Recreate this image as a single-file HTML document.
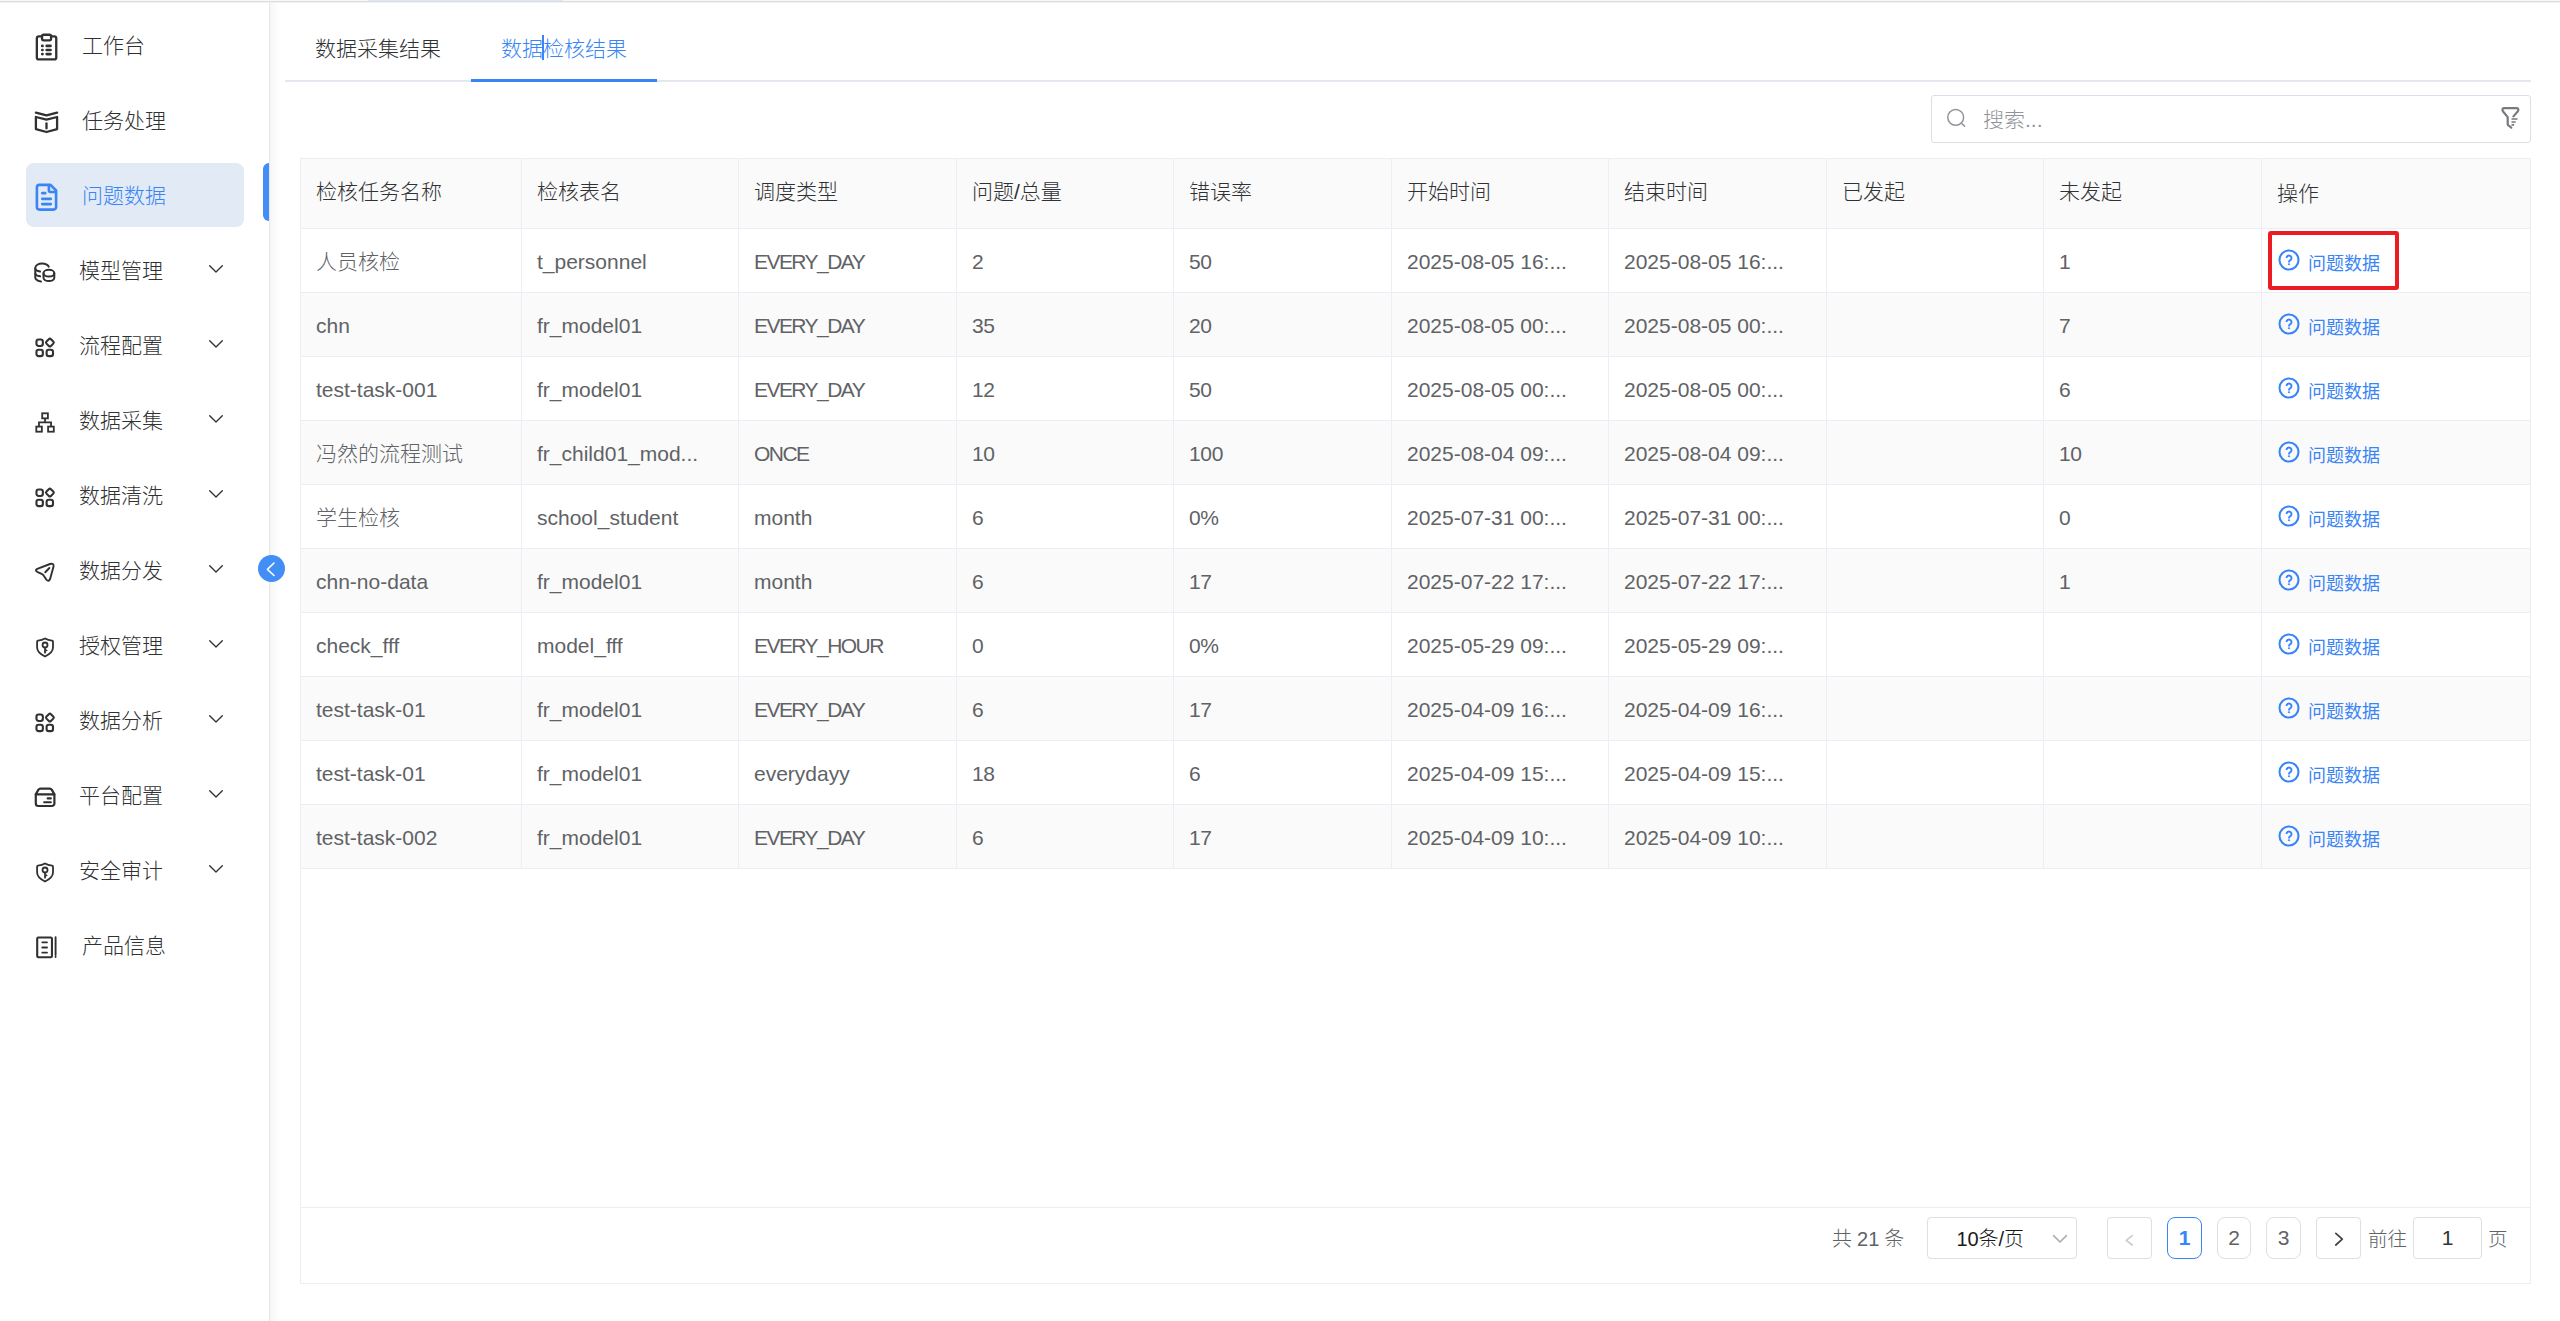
<!DOCTYPE html>
<html lang="zh-CN">
<head>
<meta charset="utf-8">
<title>数据检核结果</title>
<style>
*{box-sizing:border-box;margin:0;padding:0}
html,body{width:2560px;height:1321px;overflow:hidden;background:#fff}
body{position:relative;font-family:"Liberation Sans","Noto Sans CJK SC",sans-serif;font-size:21px;font-weight:300;color:#303133;-webkit-font-smoothing:antialiased}
.abs{position:absolute}
/* top strip */
#topline{left:0;top:0;width:2560px;height:3px;background:linear-gradient(to bottom,#f7f8fa 0,#f7f8fa 1px,#dcdcdc 1px,#dcdcdc 2px,#f1f2f7 2px,#f1f2f7 3px)}
#topline2{left:368px;top:0;width:195px;height:1px;background:#dbe7f9}
/* sidebar */
#side{left:0;top:3px;width:270px;height:1318px;background:#fff;border-right:1px solid #e6e6e6}
#sideshadow{left:270px;top:3px;width:11px;height:1318px;background:linear-gradient(to right,rgba(0,0,0,.04),rgba(0,0,0,.02) 40%,rgba(0,0,0,0))}
.mi{position:absolute;left:0;width:269px;height:64px}
.mi .ic{position:absolute;left:33px;top:19px;width:28px;height:28px}
.mi .tx{position:absolute;left:82px;top:0;height:64px;line-height:64px;font-size:21px;color:#303133;white-space:nowrap}
.mi.sub .tx{left:79px}
.mi .ar{position:absolute;left:208px;top:24px;width:16px;height:12px}
#active{left:26px;top:163px;width:218px;height:64px;border-radius:8px;background:#e1eaf5}
#activebar{left:263px;top:163px;width:6px;height:58px;border-radius:6px 0 0 6px;background:#438df6}
.mi.on .tx{color:#3a85f6}
/* collapse */
#collapse{left:258px;top:555px;width:27px;height:27px;border-radius:50%;background:#438df6}
/* tabs */
#tabline{left:285px;top:80px;width:2246px;height:2px;background:#e4e7ed}
#tabbar{left:471px;top:79px;width:186px;height:3px;background:#3a85f6}
.tab{position:absolute;top:29px;height:40px;line-height:40px;font-size:21px;white-space:nowrap}
#ibeam{left:542px;top:35px;width:2px;height:25px;background:#3a85f6}
/* search */
#search{left:1931px;top:95px;width:600px;height:48px;border:1px solid #dcdfe3;border-radius:3px;background:#fff}
#search .ph{position:absolute;left:51px;top:0;line-height:48px;font-size:21px;color:#909399}
/* table */
#tbl{left:300px;top:158px;width:2231px;height:1126px;border:1px solid #ebeef5}
.row{position:absolute;left:0;width:2229px;height:64px;border-bottom:1px solid #ebeef5}
.row.h{height:70px;top:0;background:#fafafa}
.row.s{background:#fafafa}
.c{position:absolute;top:0;height:100%;border-right:1px solid #ebeef5;padding-left:15px;white-space:nowrap;overflow:hidden;color:#606266;font-size:21px;line-height:65px}
.row.h .c{color:#303133;line-height:66px}
.c:last-child{border-right:none}
.c.op{display:flex;align-items:center;padding-left:15px}
.q{flex:none;margin-left:-.5px;margin-right:7.5px;margin-top:-1px}
.lk{color:#3a85f6;font-size:18px;font-weight:400;line-height:24px;padding-top:7px}
.up{letter-spacing:-1.55px}
.dt{letter-spacing:0}
.nm{letter-spacing:-.35px}
#redbox{left:2268px;top:231px;width:131px;height:59px;border:4px solid #ec1c24;border-radius:3px}
/* pagination */
#pg{left:300px;top:1207px;width:2231px;height:77px;border-top:1px solid #ebeef5}
.pb{position:absolute;top:9px;height:42px;border:1px solid #dcdfe3;border-radius:4px;background:#fff;text-align:center;line-height:40px;font-size:21px;color:#606266}
.pt{position:absolute;top:10px;height:42px;line-height:42px;font-size:19.5px;color:#606266;white-space:nowrap}
</style>
</head>
<body>
<div class="abs" id="topline"></div>
<div class="abs" id="topline2"></div>

<!-- SIDEBAR -->
<div class="abs" id="side"></div>
<div class="abs" id="sideshadow"></div>
<div class="abs" id="active"></div>
<div class="abs" id="activebar"></div>
<div id="menu">
<div class="mi" style="top:13.5px"><svg class="ic" width="28" height="28" viewBox="0 0 28 28" ><g fill="none" stroke="#303133" stroke-width="2.3" stroke-linejoin="round"><rect x="3.85" y="3.45" width="19.4" height="23" rx="2"/><rect x="9.05" y="1.75" width="9" height="5.6" rx="1.6" fill="#fff"/></g><g stroke="#303133" stroke-width="2.7" stroke-linecap="round"><path d="M9.3 12.9h.2M9.3 17h.2M9.3 21.1h.2M13.7 12.9h3.8M13.7 17h3.8M13.7 21.1h3.8"/></g></svg><span class="tx">工作台</span></div>
<div class="mi" style="top:88.5px"><svg class="ic" width="28" height="28" viewBox="0 0 28 28" ><g fill="none" stroke="#303133" stroke-width="2.3" stroke-linecap="round" stroke-linejoin="round"><path d="M2.9 4.6 13.5 7.35 24.1 4.6"/><path d="M2.9 9 13.5 11.7 24.1 9V21.100L13.5 24 2.9 21.100Z"/><path d="M13.5 15.500v4.900"/></g></svg><span class="tx">任务处理</span></div>
<div class="mi on" style="top:163.5px"><svg class="ic" width="28" height="28" viewBox="0 0 28 28" ><g fill="none" stroke="#3a85f6" stroke-width="2.6" stroke-linecap="round" stroke-linejoin="round"><path d="M6.4 1.900H17.500L23.100 7.500V24.100a2.500 2.500 0 0 1-2.500 2.500H6.400a2.500 2.500 0 0 1-2.500-2.500V4.400a2.500 2.500 0 0 1 2.500-2.500Z"/><path d="M15.900 2.200V7.500a1.500 1.500 0 0 0 1.500 1.500H22.800"/><path d="M9.300 10.200H12.200M9.300 15.800H17.800M9.300 21.100H17.800" stroke-width="2.700"/></g></svg><span class="tx">问题数据</span></div>
<div class="mi sub" style="top:238.5px"><svg class="ic" width="28" height="28" viewBox="0 0 28 28" ><g fill="none" stroke="#303133" stroke-width="2" stroke-linecap="round" stroke-linejoin="round"><ellipse cx="15.900" cy="15.200" rx="5.400" ry="3.400"/><path d="M10.500 15.200v4.600c0 1.900 2.400 3.300 5.400 3.300s5.400-1.400 5.400-3.300v-4.600"/><path d="M15.700 8.600C14.600 6.600 12.200 5.500 9.200 5.500 5.400 5.500 2.300 7.400 2.300 9.900V19.600C2.300 21.400 4.600 22.900 8 23.500"/><path d="M2.300 10.800C2.600 12.100 4.600 13.100 7.100 13.500M2.300 15.600C2.600 16.900 4.600 17.900 7.100 18.350"/></g></svg><span class="tx">模型管理</span><svg class="ar" width="16" height="12" viewBox="0 0 16 12"><path d="M1.700 2.800 8 9l6.300-6.200" fill="none" stroke="#303133" stroke-width="1.350" stroke-linecap="round" stroke-linejoin="round"/></svg></div>
<div class="mi sub" style="top:313.5px"><svg class="ic" width="28" height="28" viewBox="0 0 28 28" ><g fill="none" stroke="#303133" stroke-width="2.100" stroke-linejoin="round"><rect x="3.450" y="6.500" width="6.400" height="6.500" rx="2.200"/><rect x="3.450" y="16.800" width="6.400" height="6.300" rx="2.200"/><rect x="13.600" y="16.800" width="6.400" height="6.300" rx="2.200"/><rect x="13.730" y="6.410" width="6.300" height="6.300" rx="1.500" transform="rotate(45 16.880 9.560)"/></g></svg><span class="tx">流程配置</span><svg class="ar" width="16" height="12" viewBox="0 0 16 12"><path d="M1.700 2.800 8 9l6.300-6.200" fill="none" stroke="#303133" stroke-width="1.350" stroke-linecap="round" stroke-linejoin="round"/></svg></div>
<div class="mi sub" style="top:388.5px"><svg class="ic" width="28" height="28" viewBox="0 0 28 28" ><g fill="none" stroke="#303133" stroke-width="1.800" stroke-linejoin="miter"><rect x="9.200" y="5.300" width="5.700" height="5.050"/><rect x="3.300" y="18.600" width="5.550" height="5.100"/><rect x="15.100" y="18.600" width="5.700" height="5.100"/><path d="M12.030 10.400V14.400M5.970 18.600V14.400H18.030V18.600"/></g></svg><span class="tx">数据采集</span><svg class="ar" width="16" height="12" viewBox="0 0 16 12"><path d="M1.700 2.800 8 9l6.300-6.200" fill="none" stroke="#303133" stroke-width="1.350" stroke-linecap="round" stroke-linejoin="round"/></svg></div>
<div class="mi sub" style="top:463.5px"><svg class="ic" width="28" height="28" viewBox="0 0 28 28" ><g fill="none" stroke="#303133" stroke-width="2.100" stroke-linejoin="round"><rect x="3.450" y="6.500" width="6.400" height="6.500" rx="2.200"/><rect x="3.450" y="16.800" width="6.400" height="6.300" rx="2.200"/><rect x="13.600" y="16.800" width="6.400" height="6.300" rx="2.200"/><rect x="13.730" y="6.410" width="6.300" height="6.300" rx="1.500" transform="rotate(45 16.880 9.560)"/></g></svg><span class="tx">数据清洗</span><svg class="ar" width="16" height="12" viewBox="0 0 16 12"><path d="M1.700 2.800 8 9l6.300-6.200" fill="none" stroke="#303133" stroke-width="1.350" stroke-linecap="round" stroke-linejoin="round"/></svg></div>
<div class="mi sub" style="top:538.5px"><svg class="ic" width="28" height="28" viewBox="0 0 28 28" ><g fill="none" stroke="#303133" stroke-width="1.900" stroke-linejoin="round" stroke-linecap="round"><path d="M4.300 10.900 17 6Q20.900 4.800 20.600 8.300L17.100 20.900Q15.900 24.200 13.300 21.600L10.600 17.500Q9.900 16.300 8.600 15.800L4.200 13.800Q1.600 12.300 4.300 10.900Z"/><path d="M16.360 10 12.270 14.260"/></g></svg><span class="tx">数据分发</span><svg class="ar" width="16" height="12" viewBox="0 0 16 12"><path d="M1.700 2.800 8 9l6.300-6.200" fill="none" stroke="#303133" stroke-width="1.350" stroke-linecap="round" stroke-linejoin="round"/></svg></div>
<div class="mi sub" style="top:613.5px"><svg class="ic" width="28" height="28" viewBox="0 0 28 28" ><g fill="none" stroke="#303133" stroke-width="1.800" stroke-linejoin="round" stroke-linecap="round"><path d="M12.030 5.500C10 6.700 7 7.500 5 7.700Q4.100 7.800 4.100 8.800V14.500C4.100 18.500 7.500 21.300 12.030 23.500 16.500 21.300 20 18.500 20 14.500V8.800Q20 7.800 19.100 7.700C17 7.500 14 6.700 12.030 5.500Z"/><circle cx="12.030" cy="12" r="2.500"/><path d="M12.030 14.600v5.100"/></g><path d="M12.700 15.700 14.800 17.700 12.700 18.600Z" fill="#303133"/></svg><span class="tx">授权管理</span><svg class="ar" width="16" height="12" viewBox="0 0 16 12"><path d="M1.700 2.800 8 9l6.300-6.200" fill="none" stroke="#303133" stroke-width="1.350" stroke-linecap="round" stroke-linejoin="round"/></svg></div>
<div class="mi sub" style="top:688.5px"><svg class="ic" width="28" height="28" viewBox="0 0 28 28" ><g fill="none" stroke="#303133" stroke-width="2.100" stroke-linejoin="round"><rect x="3.450" y="6.500" width="6.400" height="6.500" rx="2.200"/><rect x="3.450" y="16.800" width="6.400" height="6.300" rx="2.200"/><rect x="13.600" y="16.800" width="6.400" height="6.300" rx="2.200"/><rect x="13.730" y="6.410" width="6.300" height="6.300" rx="1.500" transform="rotate(45 16.880 9.560)"/></g></svg><span class="tx">数据分析</span><svg class="ar" width="16" height="12" viewBox="0 0 16 12"><path d="M1.700 2.800 8 9l6.300-6.200" fill="none" stroke="#303133" stroke-width="1.350" stroke-linecap="round" stroke-linejoin="round"/></svg></div>
<div class="mi sub" style="top:763.5px"><svg class="ic" width="28" height="28" viewBox="0 0 28 28" ><g fill="none" stroke="#303133" stroke-width="2.200" stroke-linejoin="round" stroke-linecap="round"><path d="M2.800 11.400V20.500a2.500 2.500 0 0 0 2.500 2.500H18.900a2.500 2.500 0 0 0 2.500-2.500V11.400"/><path d="M2.800 11.400 5.300 6.900Q6.100 5.600 7.600 5.600H16.600Q18.100 5.600 18.900 6.900L21.400 11.400Z"/><path d="M14.700 15.450h3.100M11.200 19.250h6.600"/></g></svg><span class="tx">平台配置</span><svg class="ar" width="16" height="12" viewBox="0 0 16 12"><path d="M1.700 2.800 8 9l6.300-6.200" fill="none" stroke="#303133" stroke-width="1.350" stroke-linecap="round" stroke-linejoin="round"/></svg></div>
<div class="mi sub" style="top:838.5px"><svg class="ic" width="28" height="28" viewBox="0 0 28 28" ><g fill="none" stroke="#303133" stroke-width="1.800" stroke-linejoin="round" stroke-linecap="round"><path d="M12.030 5.500C10 6.700 7 7.500 5 7.700Q4.100 7.800 4.100 8.800V14.500C4.100 18.500 7.500 21.300 12.030 23.500 16.500 21.300 20 18.500 20 14.500V8.800Q20 7.800 19.100 7.700C17 7.500 14 6.700 12.030 5.500Z"/><circle cx="12.030" cy="12" r="2.500"/><path d="M12.030 14.600v5.100"/></g><path d="M12.700 15.700 14.800 17.700 12.700 18.600Z" fill="#303133"/></svg><span class="tx">安全审计</span><svg class="ar" width="16" height="12" viewBox="0 0 16 12"><path d="M1.700 2.800 8 9l6.300-6.200" fill="none" stroke="#303133" stroke-width="1.350" stroke-linecap="round" stroke-linejoin="round"/></svg></div>
<div class="mi" style="top:913.5px"><svg class="ic" width="28" height="28" viewBox="0 0 28 28" ><g fill="none" stroke="#303133" stroke-width="2.100" stroke-linejoin="round" stroke-linecap="round"><rect x="4.200" y="4.550" width="14.750" height="19.700" rx="1.200"/><path d="M9.300 9.350h4.700M9.300 14.500h4.700M9.300 19.600h4.700" stroke-width="1.900"/><path d="M22.580 4.300V22M22.580 23.800v.2" stroke-width="1.900"/></g></svg><span class="tx">产品信息</span></div>
</div>
<div class="abs" id="collapse"><svg style="position:absolute;left:0;top:0" width="27" height="27" viewBox="0 0 27 27"><path d="M16 8 9.400 14.300 16 20.500" fill="none" stroke="#fff" stroke-width="1.600" stroke-linecap="round" stroke-linejoin="round"/></svg></div>

<!-- TABS -->
<div class="abs" id="tabline"></div>
<div class="abs" id="tabbar"></div>
<div class="tab" style="left:315px;color:#303133">数据采集结果</div>
<div class="tab" style="left:501px;color:#3a85f6">数据检核结果</div>
<div class="abs" id="ibeam"></div>

<!-- SEARCH -->
<div class="abs" id="search"><svg style="position:absolute;left:12px;top:10px" width="26" height="26" viewBox="0 0 26 26"><circle cx="11.700" cy="11.400" r="7.900" fill="none" stroke="#909399" stroke-width="1.500"/><path d="M17.300 17 20.600 20.300" stroke="#909399" stroke-width="1.500" stroke-linecap="round"/></svg><span class="ph">搜索...</span><svg style="position:absolute;left:566px;top:8px" width="26" height="28" viewBox="0 0 26 28"><g fill="none" stroke="#76797d" stroke-linejoin="round" stroke-linecap="round"><path d="M15.400 12.400 19.900 7.200Q21.400 4.200 18.300 4.200H6.500Q3.400 4.200 4.900 7.200L9.700 13.100V19.900Q9.700 20.900 10.500 21.500L13.300 23.700" stroke-width="2.200"/><path d="M13.500 15H19.500M13.500 18H17.700M13.500 20.900H16.100" stroke-width="1.600" stroke-linecap="butt"/></g></svg></div>

<!-- TABLE -->
<div class="abs" id="tbl">
<div class="row h"><div class="c" style="left:0px;width:221px">检核任务名称</div><div class="c" style="left:221px;width:217px">检核表名</div><div class="c" style="left:438px;width:218px">调度类型</div><div class="c" style="left:656px;width:217px">问题/总量</div><div class="c" style="left:873px;width:218px">错误率</div><div class="c" style="left:1091px;width:217px">开始时间</div><div class="c" style="left:1308px;width:218px">结束时间</div><div class="c" style="left:1526px;width:217px">已发起</div><div class="c" style="left:1743px;width:218px">未发起</div><div class="c" style="left:1961px;width:268px;padding-top:2px">操作</div></div>
<div class="row" style="top:70px"><div class="c" style="left:0px;width:221px">人员核检</div><div class="c" style="left:221px;width:217px">t_personnel</div><div class="c up" style="left:438px;width:218px">EVERY_DAY</div><div class="c nm" style="left:656px;width:217px">2</div><div class="c nm" style="left:873px;width:218px">50</div><div class="c dt" style="left:1091px;width:217px">2025-08-05 16:...</div><div class="c dt" style="left:1308px;width:218px">2025-08-05 16:...</div><div class="c" style="left:1526px;width:217px"></div><div class="c nm" style="left:1743px;width:218px">1</div><div class="c op" style="left:1961px;width:268px"><svg class="q" width="24" height="24" viewBox="0 0 24 24"><circle cx="12" cy="12" r="9.500" fill="none" stroke="#3a85f6" stroke-width="2.100"/><path d="M9.500 10.100a2.500 2.500 0 1 1 3.800 2.100c-.9.500-1.300 1-1.300 1.800v.4" fill="none" stroke="#3a85f6" stroke-width="1.900"/><path d="M12 15 13.300 16.300 12 17.600 10.700 16.300Z" fill="#3a85f6"/></svg><span class="lk">问题数据</span></div></div>
<div class="row s" style="top:134px"><div class="c" style="left:0px;width:221px">chn</div><div class="c" style="left:221px;width:217px">fr_model01</div><div class="c up" style="left:438px;width:218px">EVERY_DAY</div><div class="c nm" style="left:656px;width:217px">35</div><div class="c nm" style="left:873px;width:218px">20</div><div class="c dt" style="left:1091px;width:217px">2025-08-05 00:...</div><div class="c dt" style="left:1308px;width:218px">2025-08-05 00:...</div><div class="c" style="left:1526px;width:217px"></div><div class="c nm" style="left:1743px;width:218px">7</div><div class="c op" style="left:1961px;width:268px"><svg class="q" width="24" height="24" viewBox="0 0 24 24"><circle cx="12" cy="12" r="9.500" fill="none" stroke="#3a85f6" stroke-width="2.100"/><path d="M9.500 10.100a2.500 2.500 0 1 1 3.800 2.100c-.9.500-1.300 1-1.300 1.800v.4" fill="none" stroke="#3a85f6" stroke-width="1.900"/><path d="M12 15 13.300 16.300 12 17.600 10.700 16.300Z" fill="#3a85f6"/></svg><span class="lk">问题数据</span></div></div>
<div class="row" style="top:198px"><div class="c" style="left:0px;width:221px">test-task-001</div><div class="c" style="left:221px;width:217px">fr_model01</div><div class="c up" style="left:438px;width:218px">EVERY_DAY</div><div class="c nm" style="left:656px;width:217px">12</div><div class="c nm" style="left:873px;width:218px">50</div><div class="c dt" style="left:1091px;width:217px">2025-08-05 00:...</div><div class="c dt" style="left:1308px;width:218px">2025-08-05 00:...</div><div class="c" style="left:1526px;width:217px"></div><div class="c nm" style="left:1743px;width:218px">6</div><div class="c op" style="left:1961px;width:268px"><svg class="q" width="24" height="24" viewBox="0 0 24 24"><circle cx="12" cy="12" r="9.500" fill="none" stroke="#3a85f6" stroke-width="2.100"/><path d="M9.500 10.100a2.500 2.500 0 1 1 3.800 2.100c-.9.500-1.300 1-1.300 1.800v.4" fill="none" stroke="#3a85f6" stroke-width="1.900"/><path d="M12 15 13.300 16.300 12 17.600 10.700 16.300Z" fill="#3a85f6"/></svg><span class="lk">问题数据</span></div></div>
<div class="row s" style="top:262px"><div class="c" style="left:0px;width:221px">冯然的流程测试</div><div class="c" style="left:221px;width:217px">fr_child01_mod...</div><div class="c up" style="left:438px;width:218px">ONCE</div><div class="c nm" style="left:656px;width:217px">10</div><div class="c nm" style="left:873px;width:218px">100</div><div class="c dt" style="left:1091px;width:217px">2025-08-04 09:...</div><div class="c dt" style="left:1308px;width:218px">2025-08-04 09:...</div><div class="c" style="left:1526px;width:217px"></div><div class="c nm" style="left:1743px;width:218px">10</div><div class="c op" style="left:1961px;width:268px"><svg class="q" width="24" height="24" viewBox="0 0 24 24"><circle cx="12" cy="12" r="9.500" fill="none" stroke="#3a85f6" stroke-width="2.100"/><path d="M9.500 10.100a2.500 2.500 0 1 1 3.800 2.100c-.9.500-1.300 1-1.300 1.800v.4" fill="none" stroke="#3a85f6" stroke-width="1.900"/><path d="M12 15 13.300 16.300 12 17.600 10.700 16.300Z" fill="#3a85f6"/></svg><span class="lk">问题数据</span></div></div>
<div class="row" style="top:326px"><div class="c" style="left:0px;width:221px">学生检核</div><div class="c" style="left:221px;width:217px">school_student</div><div class="c" style="left:438px;width:218px">month</div><div class="c nm" style="left:656px;width:217px">6</div><div class="c nm" style="left:873px;width:218px">0%</div><div class="c dt" style="left:1091px;width:217px">2025-07-31 00:...</div><div class="c dt" style="left:1308px;width:218px">2025-07-31 00:...</div><div class="c" style="left:1526px;width:217px"></div><div class="c nm" style="left:1743px;width:218px">0</div><div class="c op" style="left:1961px;width:268px"><svg class="q" width="24" height="24" viewBox="0 0 24 24"><circle cx="12" cy="12" r="9.500" fill="none" stroke="#3a85f6" stroke-width="2.100"/><path d="M9.500 10.100a2.500 2.500 0 1 1 3.800 2.100c-.9.500-1.300 1-1.300 1.800v.4" fill="none" stroke="#3a85f6" stroke-width="1.900"/><path d="M12 15 13.300 16.300 12 17.600 10.700 16.300Z" fill="#3a85f6"/></svg><span class="lk">问题数据</span></div></div>
<div class="row s" style="top:390px"><div class="c" style="left:0px;width:221px">chn-no-data</div><div class="c" style="left:221px;width:217px">fr_model01</div><div class="c" style="left:438px;width:218px">month</div><div class="c nm" style="left:656px;width:217px">6</div><div class="c nm" style="left:873px;width:218px">17</div><div class="c dt" style="left:1091px;width:217px">2025-07-22 17:...</div><div class="c dt" style="left:1308px;width:218px">2025-07-22 17:...</div><div class="c" style="left:1526px;width:217px"></div><div class="c nm" style="left:1743px;width:218px">1</div><div class="c op" style="left:1961px;width:268px"><svg class="q" width="24" height="24" viewBox="0 0 24 24"><circle cx="12" cy="12" r="9.500" fill="none" stroke="#3a85f6" stroke-width="2.100"/><path d="M9.500 10.100a2.500 2.500 0 1 1 3.800 2.100c-.9.500-1.300 1-1.300 1.800v.4" fill="none" stroke="#3a85f6" stroke-width="1.900"/><path d="M12 15 13.300 16.300 12 17.600 10.700 16.300Z" fill="#3a85f6"/></svg><span class="lk">问题数据</span></div></div>
<div class="row" style="top:454px"><div class="c" style="left:0px;width:221px">check_fff</div><div class="c" style="left:221px;width:217px">model_fff</div><div class="c up" style="left:438px;width:218px">EVERY_HOUR</div><div class="c nm" style="left:656px;width:217px">0</div><div class="c nm" style="left:873px;width:218px">0%</div><div class="c dt" style="left:1091px;width:217px">2025-05-29 09:...</div><div class="c dt" style="left:1308px;width:218px">2025-05-29 09:...</div><div class="c" style="left:1526px;width:217px"></div><div class="c" style="left:1743px;width:218px"></div><div class="c op" style="left:1961px;width:268px"><svg class="q" width="24" height="24" viewBox="0 0 24 24"><circle cx="12" cy="12" r="9.500" fill="none" stroke="#3a85f6" stroke-width="2.100"/><path d="M9.500 10.100a2.500 2.500 0 1 1 3.800 2.100c-.9.500-1.300 1-1.300 1.800v.4" fill="none" stroke="#3a85f6" stroke-width="1.900"/><path d="M12 15 13.300 16.300 12 17.600 10.700 16.300Z" fill="#3a85f6"/></svg><span class="lk">问题数据</span></div></div>
<div class="row s" style="top:518px"><div class="c" style="left:0px;width:221px">test-task-01</div><div class="c" style="left:221px;width:217px">fr_model01</div><div class="c up" style="left:438px;width:218px">EVERY_DAY</div><div class="c nm" style="left:656px;width:217px">6</div><div class="c nm" style="left:873px;width:218px">17</div><div class="c dt" style="left:1091px;width:217px">2025-04-09 16:...</div><div class="c dt" style="left:1308px;width:218px">2025-04-09 16:...</div><div class="c" style="left:1526px;width:217px"></div><div class="c" style="left:1743px;width:218px"></div><div class="c op" style="left:1961px;width:268px"><svg class="q" width="24" height="24" viewBox="0 0 24 24"><circle cx="12" cy="12" r="9.500" fill="none" stroke="#3a85f6" stroke-width="2.100"/><path d="M9.500 10.100a2.500 2.500 0 1 1 3.800 2.100c-.9.500-1.300 1-1.300 1.800v.4" fill="none" stroke="#3a85f6" stroke-width="1.900"/><path d="M12 15 13.300 16.300 12 17.600 10.700 16.300Z" fill="#3a85f6"/></svg><span class="lk">问题数据</span></div></div>
<div class="row" style="top:582px"><div class="c" style="left:0px;width:221px">test-task-01</div><div class="c" style="left:221px;width:217px">fr_model01</div><div class="c" style="left:438px;width:218px">everydayy</div><div class="c nm" style="left:656px;width:217px">18</div><div class="c nm" style="left:873px;width:218px">6</div><div class="c dt" style="left:1091px;width:217px">2025-04-09 15:...</div><div class="c dt" style="left:1308px;width:218px">2025-04-09 15:...</div><div class="c" style="left:1526px;width:217px"></div><div class="c" style="left:1743px;width:218px"></div><div class="c op" style="left:1961px;width:268px"><svg class="q" width="24" height="24" viewBox="0 0 24 24"><circle cx="12" cy="12" r="9.500" fill="none" stroke="#3a85f6" stroke-width="2.100"/><path d="M9.500 10.100a2.500 2.500 0 1 1 3.800 2.100c-.9.500-1.300 1-1.300 1.800v.4" fill="none" stroke="#3a85f6" stroke-width="1.900"/><path d="M12 15 13.300 16.300 12 17.600 10.700 16.300Z" fill="#3a85f6"/></svg><span class="lk">问题数据</span></div></div>
<div class="row s" style="top:646px"><div class="c" style="left:0px;width:221px">test-task-002</div><div class="c" style="left:221px;width:217px">fr_model01</div><div class="c up" style="left:438px;width:218px">EVERY_DAY</div><div class="c nm" style="left:656px;width:217px">6</div><div class="c nm" style="left:873px;width:218px">17</div><div class="c dt" style="left:1091px;width:217px">2025-04-09 10:...</div><div class="c dt" style="left:1308px;width:218px">2025-04-09 10:...</div><div class="c" style="left:1526px;width:217px"></div><div class="c" style="left:1743px;width:218px"></div><div class="c op" style="left:1961px;width:268px"><svg class="q" width="24" height="24" viewBox="0 0 24 24"><circle cx="12" cy="12" r="9.500" fill="none" stroke="#3a85f6" stroke-width="2.100"/><path d="M9.500 10.100a2.500 2.500 0 1 1 3.800 2.100c-.9.500-1.300 1-1.300 1.800v.4" fill="none" stroke="#3a85f6" stroke-width="1.900"/><path d="M12 15 13.300 16.300 12 17.600 10.700 16.300Z" fill="#3a85f6"/></svg><span class="lk">问题数据</span></div></div>
</div>

<div class="abs" id="redbox"></div>
<!-- PAGINATION -->
<div class="abs" id="pg">
<span class="pt" style="left:1532px;font-size:20px;word-spacing:-.5px">共 21 条</span>
<div class="pb" style="left:1627px;width:150px;color:#1a1a1a;text-align:left;padding-left:28.5px;font-size:20px;line-height:43px;letter-spacing:-.1px">10条/页<svg style="position:absolute;left:124px;top:15px" width="16" height="12" viewBox="0 0 16 12"><path d="M1.600 2.600 8 9l6.400-6.400" fill="none" stroke="#a8abb2" stroke-width="1.500" stroke-linecap="round" stroke-linejoin="round"/></svg></div>
<div class="pb" style="left:1807px;width:45px"><svg style="position:absolute;left:14px;top:12px" width="14" height="18" viewBox="0 0 14 18"><path d="M10.200 6.800 4.300 11.500l5.900 4.700" fill="none" stroke="#c9ccd3" stroke-width="1.700" stroke-linecap="round" stroke-linejoin="round" transform="translate(0 -1.200)"/></svg></div>
<div class="pb" style="left:1867px;width:35px;border-color:#3a85f6;color:#3a85f6;font-weight:bold;border-radius:8px">1</div>
<div class="pb" style="left:1917px;width:34px;border-radius:8px">2</div>
<div class="pb" style="left:1966px;width:35px;border-radius:8px">3</div>
<div class="pb" style="left:2016px;width:45px"><svg style="position:absolute;left:15px;top:12px" width="14" height="18" viewBox="0 0 14 18"><path d="M3.800 3.400 10.300 9.200 3.800 15" fill="none" stroke="#404246" stroke-width="1.700" stroke-linecap="round" stroke-linejoin="round"/></svg></div>
<span class="pt" style="left:2068px">前往</span>
<div class="pb" style="left:2113px;width:69px;color:#303133">1</div>
<span class="pt" style="left:2188px">页</span>
</div>
</body>
</html>
